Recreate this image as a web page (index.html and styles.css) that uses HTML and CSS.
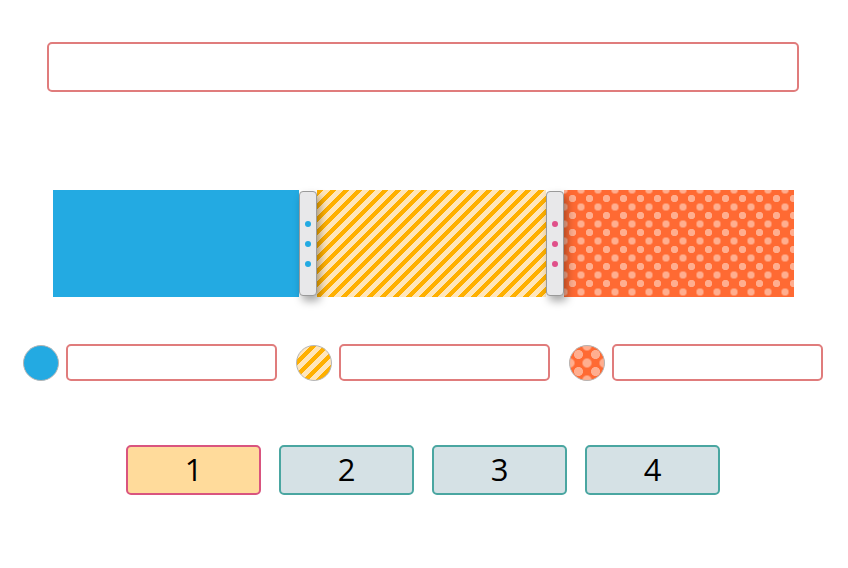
FILE: index.html
```html
<!DOCTYPE html>
<html lang="en">

<head>
  <meta charset="UTF-8">
  <title>Ratio Slider</title>
  <link rel="stylesheet" href="styles.css">
</head>

<body>

  <div class="page">
    <input type="text" class="title-input">

    <div class="bar">
      <div class="seg seg-blue" style="width: 246px"></div>
      <div class="handle handle-blue"><span></span><span></span><span></span></div>
      <div class="seg seg-stripes" style="width: 229px"></div>
      <div class="handle handle-pink"><span></span><span></span><span></span></div>
      <div class="seg seg-dots" style="width: 230px"></div>
    </div>

    <div class="swatches">
      <div class="swatch">
        <div class="chip seg-blue"></div>
        <input type="text" class="label-input">
      </div>
      <div class="swatch">
        <div class="chip seg-stripes"></div>
        <input type="text" class="label-input">
      </div>
      <div class="swatch">
        <div class="chip chip-dots"></div>
        <input type="text" class="label-input">
      </div>
    </div>

    <div class="steps">
      <button class="step active">1</button>
      <button class="step">2</button>
      <button class="step">3</button>
      <button class="step">4</button>
    </div>
  </div>

</body>

</html>
```

FILE: styles.css
```css
body {
  margin: 0;
  background: white;
  font-family: "Open Sans", Arial, sans-serif;
}

.page {
  padding-top: 42px;
}

input[type="text"] {
  box-sizing: border-box;
  border: 2px solid #e07c7c;
  border-radius: 5px;
  background: white;
  outline: none;
}

.title-input {
  display: block;
  width: 752px;
  height: 50px;
  margin-left: 47px;
}

.bar {
  display: flex;
  align-items: center;
  width: 741px;
  height: 107px;
  margin: 98px 0 0 53px;
}

.seg {
  height: 100%;
}

.seg-blue {
  background: #23aae2;
}

.seg-stripes {
  background: repeating-linear-gradient(135deg,
      #ffb000 0, #ffb000 4.6px,
      #ffe6bb 4.6px, #ffe6bb 9.2px);
}

.seg-dots {
  background-color: #ff6a33;
  background-image:
    radial-gradient(circle, #ffae8f 3.4px, transparent 4px),
    radial-gradient(circle, #ffae8f 3.4px, transparent 4px);
  background-size: 17px 17px;
  background-position: 0 0, 8.5px 8.5px;
}

.handle {
  position: relative;
  z-index: 1;
  box-sizing: border-box;
  width: 18px;
  height: 105px;
  background: #e8e8ea;
  border: 1px solid #9a9a9a;
  border-radius: 4px;
  box-shadow: 3px 5px 8px rgba(0, 0, 0, 0.35);
  display: flex;
  flex-direction: column;
  align-items: center;
  justify-content: center;
  gap: 14px;
}

.handle span {
  width: 6px;
  height: 6px;
  border-radius: 50%;
}

.handle-blue span {
  background: #23aae2;
}

.handle-pink span {
  background: #e0508a;
}

.swatches {
  display: flex;
  gap: 19px;
  margin: 47px 0 0 23px;
}

.swatch {
  display: flex;
  align-items: center;
  gap: 7px;
}

.chip {
  box-sizing: border-box;
  width: 36px;
  height: 36px;
  border-radius: 50%;
  border: 1px solid #b5b5b5;
}

.chip-dots {
  background-color: #ff6a33;
  background-image:
    radial-gradient(circle, #ffae8f 4.2px, transparent 4.8px),
    radial-gradient(circle, #ffae8f 4.2px, transparent 4.8px);
  background-size: 17px 17px;
  background-position: 0 0, 8.5px 8.5px;
}

.label-input {
  width: 211px;
  height: 37px;
}

.steps {
  display: flex;
  justify-content: center;
  gap: 18px;
  margin-top: 64px;
  padding-right: 2px;
}

.step {
  box-sizing: border-box;
  width: 135px;
  height: 50px;
  background: #d5e1e5;
  border: 2px solid #4aa6a1;
  border-radius: 5px;
  font-family: "Open Sans", Arial, sans-serif;
  font-size: 31px;
  font-weight: 500;
  line-height: 1;
  color: black;
  padding: 0 0 2px;
}

.step.active {
  background: #ffdb9b;
  border-color: #d9547f;
}
```
